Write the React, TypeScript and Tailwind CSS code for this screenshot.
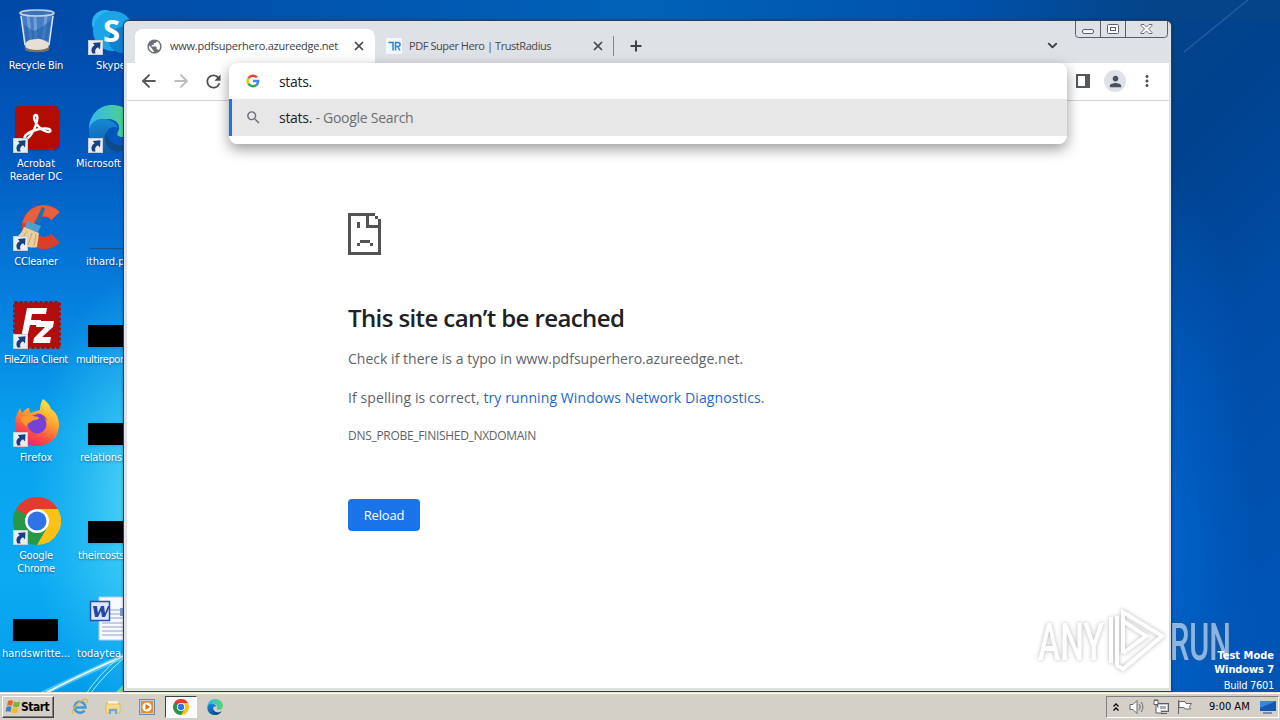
import React from 'react';
import { ArrowLeft, ArrowRight, ChevronDown, Plus, X } from 'lucide-react';
import { MdMoreVert, MdPerson, MdPublic, MdRefresh, MdSearch } from 'react-icons/md';

interface DesktopItem {
  label: string;
  icon: React.ReactNode;
  labelClass: string;
  column?: 'right';
  shortcut?: boolean;
}

const ShortcutArrow: React.FC = () => (
  <svg viewBox="0 0 15 15" className="absolute bottom-0 left-0 h-[15px] w-[15px]">
    <rect x="0.5" y="0.5" width="14" height="14" fill="#e9edf2" stroke="#c9ced6" />
    <path d="M4.500 13.500C2.500 10 3.500 6.800 6.600 5.200L4.800 3l7.700-.8-.5 7.300-2-2.200C7.600 8.400 6.400 10.500 7.500 13.500z" fill="#1a3f80" />
  </svg>
);

const RecycleBinIcon = () => (
  <svg viewBox="0 0 48 48" className="h-12 w-12">
    <path d="M7 5l5 37c3 4 21 4 24 0l5-37z" fill="#7fa9dc" fillOpacity="0.55" />
    <path d="M8 9l4 29M40 9l-4 29" stroke="#d7e5f5" strokeWidth="1.500" />
    <path d="M15 9l3 25M22 10l1 25M33 9l-3 25" stroke="#b9d2ef" strokeOpacity="0.4" strokeWidth="3" />
    <path d="M11 18l10 6 8-4 9-7-3 20-22 2z" fill="#1f5fae" fillOpacity="0.6" />
    <path d="M12 37c4-6 8-4 12-5s8 2 12 4l-1 6c-5 3-17 3-22 0z" fill="#e7dfd3" />
    <path d="M12 40c5 4 19 4 24 0v3c-4 3-20 3-24 0z" fill="#77706b" />
    <ellipse cx="24" cy="6" rx="17" ry="3" fill="#3c73b6" stroke="#c6d3e2" strokeWidth="1.600" />
  </svg>
);

const SkypeIcon = () => (
  <svg viewBox="0 0 48 48" className="h-12 w-12">
    <circle cx="17" cy="16" r="13" fill="#29b6f0" />
    <circle cx="25" cy="24" r="20" fill="#1ba5e8" />
    <circle cx="34" cy="33" r="13" fill="#0f7fd0" />
    <text x="15" y="35" fontSize="31" fontWeight="700" fill="#fff" fontFamily="Open Sans, sans-serif">S</text>
  </svg>
);

const AcrobatIcon = () => (
  <svg viewBox="0 0 48 48" className="h-12 w-12">
    <rect x="3" y="3" width="44" height="43" rx="5" fill="#0b3d7a" fillOpacity="0.5" />
    <rect x="2" y="1" width="44" height="43" rx="5" fill="#b30b00" />
    <path
      d="M12 33.500c-2-2 3-6 9-8 7-2.500 16-3 16.500 0s-7 1.500-12-4c-4-4-6-11-3-11.500 4-.5 1 10-2 15.500-3 6-7 9.500-8.500 8z"
      fill="none"
      stroke="#fff"
      strokeWidth="2.400"
    />
  </svg>
);

const EdgeIcon: React.FC<{ className?: string; id: string }> = ({ className, id }) => (
  <svg viewBox="0 0 48 48" className={className}>
    <defs>
      <linearGradient id={`${id}-top`} x1="0" x2="1">
        <stop offset="0" stopColor="#35b9ef" />
        <stop offset="1" stopColor="#55d66b" />
      </linearGradient>
      <linearGradient id={`${id}-body`} x1="0" y1="0" x2="0" y2="1">
        <stop offset="0" stopColor="#1888d4" />
        <stop offset="1" stopColor="#0c59a4" />
      </linearGradient>
    </defs>
    <path d="M1 25C1 10 11 0 24 0c14 0 24 10 24 20 0 7-5 12-12 12-6 0-8-2-6-5 4-8-3-14-12-13C9 14 3 19 1 25z" fill={`url(#${id}-top)`} />
    <path d="M1 26c0-8 8-13 16-12 8 1 12 6 13 9-2-2-11-2-12 7-.5 9 14 17 26 7-4 7-11 11-20 11C10 48 1 38 1 26z" fill={`url(#${id}-body)`} />
    <path d="M18 27c-4 8 1 18 11 20 6-1 11-4 15-10-12 8-26 0-26-10z" fill="#114a8b" />
  </svg>
);

const CCleanerIcon = () => (
  <svg viewBox="0 0 48 48" className="h-12 w-12">
    <path d="M42.500 13A16 16 0 1 0 42.500 35" fill="none" stroke="#d8402c" strokeWidth="12" />
    <path d="M42.500 13A16 16 0 0 0 15 21" fill="none" stroke="#e9603f" strokeWidth="11" />
    <path d="M29 4l3 1-5 16-5-2z" fill="#236fa9" />
    <path d="M15 18l13 5-3 6-14-4z" fill="#4f9fce" />
    <path d="M11 24l15 6-2 14c-6 2-16-1-23-8 4-3 8-6 10-12z" fill="#e9cf9f" />
    <path d="M14 28l-7 11M19 30l-4 12M23 31l-2 12" stroke="#c9a566" />
  </svg>
);

const FileZillaIcon = () => (
  <svg viewBox="0 0 48 48" className="h-12 w-12">
    <rect x="1.500" y="1.500" width="45" height="45" fill="#b30d0d" stroke="#a01010" strokeWidth="3" strokeDasharray="3 2" />
    <path d="M14 7h20l-1 6H19l-1 6h10l-1 5H17l-3 13H8z" fill="#fff" />
    <path d="M24 20h17l-1 6-11 10h9l-1 6H20l1-5 11-11h-9z" fill="#fff" />
  </svg>
);

const FirefoxIcon = () => (
  <svg viewBox="0 0 48 48" className="h-12 w-12">
    <defs>
      <linearGradient id="fox" x1="0.800" y1="0" x2="0.300" y2="1">
        <stop offset="0" stopColor="#fff04a" />
        <stop offset="0.400" stopColor="#ffa52e" />
        <stop offset="0.750" stopColor="#ff4a45" />
        <stop offset="1" stopColor="#e5207a" />
      </linearGradient>
    </defs>
    <path d="M30 0c4 3 7 6 8 10 5 3 8 9 8 16 0 12-9 21-22 21C11 47 2 38 2 26 2 19 4 14 7 9l2 5c3-3 5-5 7-5l1 5c3-1 7-2 10-3 0-4 1-8 3-11z" fill="url(#fox)" />
    <circle cx="24" cy="25" r="9.500" fill="#7542d8" />
    <path d="M8 19c4-3 7-3 12-2 3 1 5 0 6 2-2 3-6 1-8 4-3 1-4 2-4 4-3-1-6-4-6-8z" fill="#ff9a2a" />
    <path d="M22 15c6-2 11 2 13 8-2-4-7-6-13-8z" fill="#a02fc4" />
  </svg>
);

const ChromeIcon: React.FC<{ className?: string }> = ({ className }) => (
  <svg viewBox="0 0 48 48" className={className}>
    <path d="M24 24L3.200 12A24 24 0 0 1 44.800 12z" fill="#e33b2e" />
    <path d="M24 24V12h20.800A24 24 0 0 1 24 48z" fill="#fbc116" />
    <path d="M24 24l10.400 6L24 48A24 24 0 0 1 3.200 12z" fill="#279847" />
    <path d="M24 12h20.800L24 24z" fill="#fbc116" />
    <path d="M3.200 12L13.600 30 24 24V12z" fill="#e33b2e" />
    <path d="M3.200 12l10.400 18L24 24z" fill="#279847" />
    <circle cx="24" cy="24" r="12" fill="#fff" />
    <circle cx="24" cy="24" r="9.500" fill="#2f74e6" />
  </svg>
);

const WordDocIcon = () => (
  <svg viewBox="0 0 48 48" className="h-12 w-12">
    <path d="M11 2h37v43H11z" fill="#f7f9fe" stroke="#b9c8e6" />
    <path d="M22 15h26M22 19h26M22 23h26M14 28h34M14 32h34M14 36h34M14 40h34" stroke="#8ba5d8" />
    <rect x="32" y="13" width="16" height="8" fill="#7d9bc9" />
    <rect x="2.500" y="6.500" width="19" height="19" fill="#dbe6fa" stroke="#2c4f9e" strokeWidth="1.500" />
    <path d="M5 11h4l1 7 3-7h3l1 7 3-7h2l-5 11h-3l-1-6-3 6H7z" fill="#28489b" />
  </svg>
);

const GoogleIcon: React.FC = () => (
  <svg viewBox="0 0 14 14" className="h-[14px] w-[14px]" fill="none" strokeWidth="2.400">
    <path d="M2.400 4.300A5.300 5.300 0 0 1 10.900 3.500" stroke="#ea4335" />
    <path d="M2.400 9.700A5.300 5.300 0 0 1 2.400 4.300" stroke="#fbbc05" />
    <path d="M10.600 10.900A5.300 5.300 0 0 1 2.400 9.700" stroke="#34a853" />
    <path d="M7 7h5.200a5.300 5.300 0 0 1-1.800 4.100" stroke="#4285f4" />
  </svg>
);

const BlackThumb = () => (
  <div className="flex h-12 w-12 items-end pb-[2px]">
    <div className="h-[22px] w-[45px] bg-black shadow-sm" />
  </div>
);

const leftItems: DesktopItem[] = [
  { label: 'Recycle Bin', icon: <RecycleBinIcon />, labelClass: 'tracking-[-0.25px]' },
  { label: 'Acrobat Reader DC', icon: <AcrobatIcon />, shortcut: true, labelClass: '' },
  { label: 'CCleaner', icon: <CCleanerIcon />, shortcut: true, labelClass: 'tracking-[-0.2px]' },
  { label: 'FileZilla Client', icon: <FileZillaIcon />, shortcut: true, labelClass: 'tracking-[-0.35px]' },
  { label: 'Firefox', icon: <FirefoxIcon />, shortcut: true, labelClass: '' },
  { label: 'Google Chrome', icon: <ChromeIcon className="h-12 w-12" />, shortcut: true, labelClass: 'tracking-[-0.2px]' },
  { label: 'handswritte...', icon: <BlackThumb />, labelClass: '' },
];

const rightItems: DesktopItem[] = [
  { label: 'Skype', icon: <SkypeIcon />, shortcut: true, column: 'right', labelClass: 'pl-[24px]' },
  {
    label: 'Microsoft',
    icon: <EdgeIcon id="edge-desktop" className="h-12 w-12" />,
    shortcut: true,
    column: 'right',
    labelClass: 'pl-1',
  },
  {
    label: 'ithard.p',
    icon: (
      <div className="flex h-12 w-12 items-end pb-[2px] pl-0.5">
        <div className="h-px w-12 bg-[#1a4f86]" />
      </div>
    ),
    column: 'right',
    labelClass: 'pl-[14px]',
  },
  { label: 'multirepor', icon: <BlackThumb />, column: 'right', labelClass: 'pl-1 tracking-[-0.4px]' },
  { label: 'relationsl', icon: <BlackThumb />, column: 'right', labelClass: 'pl-2 tracking-[-0.1px]' },
  { label: 'theircosts', icon: <BlackThumb />, column: 'right', labelClass: 'pl-1.5 tracking-[-0.2px]' },
  { label: 'todaytea', icon: <WordDocIcon />, column: 'right', labelClass: 'pl-[5px]' },
];

const DesktopIcon: React.FC<{ item: DesktopItem }> = ({ item }) => (
  <div className={`flex h-[98px] w-[72px] flex-col pt-[7px] ${item.column === 'right' ? 'items-start' : 'items-center'}`}>
    <div className={`relative h-12 w-12 shrink-0 ${item.column === 'right' ? 'ml-4' : 'ml-0.5'}`}>
      {item.icon}
      {item.shortcut && <ShortcutArrow />}
    </div>
    <span
      className={`mt-1 text-[11px] leading-[13px] text-white [text-shadow:0_1px_2px_rgba(0,20,60,0.5)] ${
        item.column === 'right' ? 'whitespace-nowrap' : 'text-center'
      } ${item.labelClass}`}
    >
      {item.label}
    </span>
  </div>
);

const Wallpaper: React.FC = () => (
  <svg viewBox="0 0 1280 720" className="absolute inset-0 h-[720px] w-[1280px]">
    <defs>
      <linearGradient id="sky-left" x1="0" y1="0" x2="0" y2="1">
        <stop offset="0" stopColor="#0148a6" />
        <stop offset="0.200" stopColor="#0258bd" />
        <stop offset="0.400" stopColor="#057cdc" />
        <stop offset="0.600" stopColor="#08a1ee" />
        <stop offset="0.800" stopColor="#0dabf3" />
        <stop offset="1" stopColor="#0098ea" />
      </linearGradient>
      <linearGradient id="sky-right" x1="0" y1="0" x2="0.250" y2="1">
        <stop offset="0" stopColor="#054489" />
        <stop offset="0.300" stopColor="#00428e" />
        <stop offset="0.600" stopColor="#004ca6" />
        <stop offset="1" stopColor="#0054b4" />
      </linearGradient>
      <linearGradient id="top-strip" x1="0" x2="1">
        <stop offset="0" stopColor="#0148a6" />
        <stop offset="0.500" stopColor="#0162b8" />
        <stop offset="0.750" stopColor="#0052ac" />
        <stop offset="0.900" stopColor="#054489" />
        <stop offset="1" stopColor="#054489" />
      </linearGradient>
      <radialGradient id="glow">
        <stop offset="0" stopColor="#6ee8f8" stopOpacity="0.850" />
        <stop offset="1" stopColor="#3ccff5" stopOpacity="0" />
      </radialGradient>
      <radialGradient id="blue-glow">
        <stop offset="0" stopColor="#0067cf" stopOpacity="0.900" />
        <stop offset="1" stopColor="#0060c8" stopOpacity="0" />
      </radialGradient>
    </defs>
    <rect width="640" height="720" fill="url(#sky-left)" />
    <rect x="1100" width="180" height="720" fill="url(#sky-right)" />
    <rect width="1280" height="20" fill="url(#top-strip)" />
    <ellipse cx="150" cy="500" rx="120" ry="230" fill="url(#glow)" />
    <ellipse cx="1165" cy="540" rx="90" ry="380" fill="url(#blue-glow)" />
    <path d="M1184 52L1248 0" stroke="#4f86bd" strokeOpacity="0.400" strokeWidth="1.500" />
    <path d="M42 694Q75 678 126 655" fill="none" stroke="#9fe9fb" strokeOpacity="0.500" strokeWidth="5" />
    <path d="M44 694Q75 677 126 655" fill="none" stroke="#e4fbff" strokeWidth="1.500" />
    <path d="M86 694Q98 676 118 658M90 694Q103 676 124 658" fill="none" stroke="#a5eefb" strokeWidth="1" />
    <path d="M114 694l10-10v10z" fill="#6fd895" />
  </svg>
);

const Tab: React.FC<{ title: string; icon: React.ReactNode; active?: boolean; titleClass: string }> = ({
  title,
  icon,
  active,
  titleClass,
}) => (
  <div className={`flex h-[34px] items-center ${active ? 'w-[240px] rounded-t-lg bg-white pl-[11px]' : 'w-[238px] pl-[11px]'}`}>
    {icon}
    <span
      className={`min-w-0 flex-1 whitespace-nowrap pl-[7px] text-[11px] ${active ? 'text-[#3c4043]' : 'text-[#45494d]'}`}
    >
      <span className={titleClass}>{title}</span>
    </span>
    <X size={14} strokeWidth={3} className={`shrink-0 text-[#45494d] ${active ? 'mr-[9px]' : 'mr-2'}`} />
  </div>
);

const WindowControls: React.FC = () => (
  <svg viewBox="0 0 94 18" className="h-[18px] w-[94px]" fill="none" stroke="#5a5e66">
    <path d="M.5 0v13.500a3 3 0 0 0 3 3h86a3 3 0 0 0 3-3V0M25.500 0v16.500M50.500 0v16.500" strokeWidth="1" />
    <rect x="7.500" y="8.500" width="11" height="4" rx="1.500" fill="#fff" />
    <rect x="32.500" y="3.500" width="11" height="9" rx="1" fill="#fff" />
    <rect x="35.500" y="6.500" width="5" height="3" />
    <path d="M66 3.500h3l2.500 2.500L74 3.500h3v1L73.500 8l3.500 3.500v1h-3l-2.500-2.500L69 12.500h-3v-1L69.500 8 66 4.500z" fill="#fff" strokeWidth="0.900" />
  </svg>
);

const SadPageIcon: React.FC = () => (
  <svg viewBox="0 0 33 42" className="h-[42px] w-[33px]" fill="#535353" shapeRendering="crispEdges">
    <path d="M0 0h27v3h-6v9h9v-6h3v36H0zM3 3v36h27V15H18V3z" fillRule="evenodd" />
    <path d="M27 3h3v3h-3zM9 9h3v6H9zM12 27h10v3H12zM9 30h3v3H9zM22 30h3v3h-3z" />
  </svg>
);

const BrowserWindow: React.FC = () => (
  <div className="absolute left-[123px] top-[20px] flex h-[672px] w-[1049px] flex-col rounded-t-md border border-[#2c3f5c] bg-[#dee1e6] pb-[3px] pl-[3px] pr-[2px] shadow-[0_0_3px_rgba(0,0,0,0.35)]">
    <div className="flex h-[42px] shrink-0 justify-between pl-2">
      <div className="flex items-end">
        <Tab
          active
          title="www.pdfsuperhero.azureedge.net"
          icon={<MdPublic size={17} className="shrink-0 text-[#6b6f73]" />}
          titleClass="tracking-[-0.25px]"
        />
        <Tab
          title="PDF Super Hero | TrustRadius"
          icon={
            <svg viewBox="0 0 16 16" className="h-4 w-4 shrink-0">
              <rect width="16" height="16" rx="1" fill="#f3f8fe" />
              <path d="M2.500 4.500H7v8M9.500 12.500v-8H12a2 2 0 0 1 0 4H9.500M12 9l2 3.500" fill="none" stroke="#2b83ea" strokeWidth="1.500" />
            </svg>
          }
          titleClass="tracking-[-0.43px]"
        />
        <div className="mb-[7px] flex h-5 items-center border-l border-[#85898f] pl-[14px]">
          <Plus size={16} strokeWidth={3} className="text-[#3c4043]" />
        </div>
      </div>
      <div className="flex flex-col items-end">
        <WindowControls />
        <ChevronDown size={15} strokeWidth={3} className="-mt-px mr-[109px] text-[#3c4043]" />
      </div>
    </div>

    <div className="flex h-[38px] shrink-0 items-center justify-between border-b border-[#d5d5d7] bg-white pb-px pl-3 pr-[16px]">
      <div className="flex items-center gap-3">
        <ArrowLeft size={20} strokeWidth={2.400} className="text-[#55585c]" />
        <ArrowRight size={20} strokeWidth={2.400} className="text-[#bcbec0]" />
        <MdRefresh size={21} className="text-[#4d5054]" />
      </div>
      <div className="flex items-center">
        <div className="mr-[14px] h-[14px] w-[14px] border-2 border-r-[5px] border-[#55585c]" />
        <div className="mr-[12px] flex h-[22px] w-[22px] items-center justify-center rounded-full bg-[#dee1e6]">
          <MdPerson size={17} className="text-[#4a5160]" />
        </div>
        <MdMoreVert size={18} className="-mr-[3px] text-[#4d5054]" />
      </div>
    </div>

    <div className="flex flex-1 flex-col items-start bg-white pl-[221px] pt-[112px] text-[#5f6368]">
      <SadPageIcon />
      <h1 className="mt-[47px] whitespace-nowrap text-[24px] font-semibold leading-[32px] tracking-[-0.6px] text-[#202124]">
        This site can’t be reached
      </h1>
      <p className="mt-[15px] whitespace-nowrap text-[14px] leading-[20px] tracking-[0.02px]">
        Check if there is a typo in www.pdfsuperhero.azureedge.net.
      </p>
      <p className="mt-[19px] whitespace-nowrap text-[14px] leading-[20px] tracking-[0.1px]">
        If spelling is correct, <a className="text-[#1a67d2]">try running Windows Network Diagnostics</a>.
      </p>
      <p className="mt-[19px] whitespace-nowrap text-[12px] leading-[18px] tracking-[-0.3px]">DNS_PROBE_FINISHED_NXDOMAIN</p>
      <button className="mt-[54px] h-8 w-[72px] rounded-[4px] bg-[#1a73e8] pt-px text-[13px] tracking-[-0.2px] text-white">
        Reload
      </button>
    </div>

    <div className="absolute left-[105px] top-[42px] h-[81px] w-[838px] overflow-hidden rounded-lg bg-white shadow-[0_5px_14px_rgba(0,0,0,0.4)]">
      <div className="flex h-9 items-center pl-[17px] text-[14px] text-[#202124]">
        <GoogleIcon />
        <span className="pl-[19px] tracking-[-0.32px]">stats.</span>
      </div>
      <div className="flex h-[37px] items-center border-l-[3px] border-[#1a73e8] bg-[#e7e7e8] pl-[13px] text-[14px] text-[#202124]">
        <MdSearch size={17} className="text-[#6b6f73]" />
        <span className="whitespace-pre pl-[17px] tracking-[-0.28px]">
          stats. <span className="text-[#6b6f73]">- Google Search</span>
        </span>
      </div>
    </div>
  </div>
);

const Watermark: React.FC = () => (
  <div className="absolute left-[1038px] top-[607px] h-[68px] w-[196px] opacity-55">
    <svg viewBox="0 0 196 68" className="h-[68px] w-[196px] [filter:drop-shadow(0_0_2px_rgba(80,80,80,0.75))]">
      <g fill="#fff" fontFamily="Roboto, sans-serif" fontSize="52" fontWeight="500">
        <text x="0" y="53" textLength="66" lengthAdjust="spacingAndGlyphs">ANY</text>
        <text x="132" y="53" textLength="61" lengthAdjust="spacingAndGlyphs">RUN</text>
      </g>
      <path d="M73 56V10M79 58V9M85 46V5l39 24-39 33-7-4M85 46l23-17-23-15" fill="none" stroke="#fff" strokeWidth="4" />
    </svg>
  </div>
);

const ExplorerIcon = () => (
  <svg viewBox="0 0 16 16" className="h-4 w-4">
    <path d="M1 3h5l1 1h7v9H1z" fill="#e7c766" />
    <path d="M3 2h10v4H3z" fill="#f7f2df" />
    <path d="M1 5h14v9h-3v-4H4v4H1z" fill="#f5dd8b" stroke="#c9a545" strokeWidth="0.500" />
    <path d="M4 15v-5h8v5h-2v-3H6v3z" fill="#6ba9d8" />
  </svg>
);

const IeIcon = () => (
  <svg viewBox="0 0 18 18" className="h-[18px] w-[18px]" fill="none">
    <path d="M13.500 12.500A5.500 5.500 0 1 1 14.500 9.500H5" stroke="#3d9bdd" strokeWidth="2.600" />
    <path d="M2 16C0 13 5 6 10 3s8-2 6 2" stroke="#e5b73a" strokeWidth="1.300" />
  </svg>
);

const Taskbar: React.FC = () => (
  <div className="absolute bottom-0 left-0 flex h-7 w-[1280px] items-center justify-between border-t border-[#e4e1dc] bg-[#d4d0c8] pl-0.5 pr-px pt-px shadow-[inset_0_1px_0_#fff]">
    <div className="flex items-center">
      <div className="flex h-[22px] w-[52px] items-center border border-b-[#404040] border-l-white border-r-[#404040] border-t-white pl-0.5 shadow-[inset_-1px_-1px_0_#808080]">
        <svg viewBox="0 0 16 16" className="h-4 w-4 shrink-0">
          <path d="M3 2c2-1 4-1 5 0L7 7C5 6 3.500 6 2 7z" fill="#e8622a" />
          <path d="M9 2.500c2 1 4 1 6 0L14 7.500c-2 1-4 1-6 0z" fill="#7db72f" />
          <path d="M1.500 8c2-1 4-1 5 0l-1 5c-2-1-3.500-1-5 0z" fill="#3c80d0" />
          <path d="M7.500 8.500c2 1 4 1 6 0l-1 5c-2 1-4 1-6 0z" fill="#f6bd21" />
        </svg>
        <span className="text-[12px] font-bold tracking-[-0.5px] text-black">Start</span>
      </div>
      <div className="ml-[17px] flex items-center">
        <IeIcon />
        <div className="ml-4"><ExplorerIcon /></div>
        <svg viewBox="0 0 16 16" className="ml-[18px] h-4 w-4">
          <rect x="0.500" y="0.500" width="15" height="15" fill="#b8d3ec" stroke="#5f8fc0" />
          <rect x="2" y="2" width="12" height="12" fill="#f28a1d" />
          <circle cx="8" cy="8" r="4.600" fill="#fff" />
          <path d="M6.500 5l4.500 3-4.500 3z" fill="#e26b0a" />
        </svg>
        <div className="ml-[10px] flex h-[22px] w-[32px] items-center justify-center border border-b-white border-l-[#404040] border-r-white border-t-[#404040] bg-[#fafafa]">
          <ChromeIcon className="h-4 w-4" />
        </div>
        <EdgeIcon id="edge-taskbar" className="ml-[10px] h-4 w-4" />
      </div>
    </div>

    <div className="flex h-[22px] w-[173px] items-center border border-b-white border-l-[#808080] border-r-white border-t-[#808080] pl-[5px]">
      <svg viewBox="0 0 8 10" className="h-[10px] w-2" fill="none" stroke="#000" strokeWidth="1.300">
        <path d="M1.500 4.500L4 2l2.500 2.500M1.500 8.500L4 6l2.500 2.500" />
      </svg>
      <svg viewBox="0 0 16 16" className="ml-[9px] h-4 w-4" fill="none" stroke="#66686b">
        <path d="M1 5.500h3l4-4v13l-4-4H1z" fill="#fff" />
        <path d="M10 5c1.500 2 1.500 4 0 6M12 3c2.500 3 2.500 7 0 10" />
      </svg>
      <svg viewBox="0 0 16 16" className="ml-2 h-4 w-4" fill="none" stroke="#5c5f63">
        <rect x="4.500" y="4.500" width="11" height="8" fill="#c4c7ca" />
        <rect x="6.500" y="6.500" width="7" height="4" fill="#a9adb2" stroke="#fff" />
        <path d="M1 1.500h4v4H1zM3 6v8h6M8 14.500h6M2 0v2M4 0v2" fill="#fff" />
      </svg>
      <svg viewBox="0 0 16 16" className="ml-2 h-4 w-4" fill="#fff" stroke="#66686b">
        <path d="M1.500 1v14M2 2.500h6l1 2h5.500l-2 3 1 2.500H8l-1-1.500H2z" />
      </svg>
      <span className="ml-4 whitespace-nowrap text-[11px] text-black">9:00 AM</span>
      <svg viewBox="0 0 16 14" className="ml-[10px] h-[14px] w-4">
        <rect width="16" height="10" y="1" fill="#1558b0" />
        <path d="M0 1h16L0 8z" fill="#3d86d8" />
        <path d="M3 13h9" stroke="#7c8ba0" strokeWidth="2" />
      </svg>
    </div>
  </div>
);

export default function App() {
  return (
    <div className="relative h-[720px] w-[1280px] overflow-hidden bg-[#0052ac] font-['DejaVu_Sans_Condensed','DejaVu_Sans',sans-serif]">
      <Wallpaper />
      <div className="relative flex">
        <div className="flex w-[72px] flex-col">
          {leftItems.map((item) => (
            <DesktopIcon key={item.label} item={item} />
          ))}
        </div>
        <div className="flex w-[72px] flex-col">
          {rightItems.map((item) => (
            <DesktopIcon key={item.label} item={item} />
          ))}
        </div>
      </div>
      <div className="font-['Open_Sans','Noto_Sans',sans-serif]">
        <BrowserWindow />
      </div>
      <Watermark />
      <div className="absolute right-[6px] top-[649px] text-right text-[11px] leading-[14px] text-white">
        <p className="font-bold">Test Mode</p>
        <p className="font-bold tracking-[-0.1px]">Windows 7</p>
        <p className="pt-0.5 tracking-[-0.3px]">Build 7601</p>
      </div>
      <Taskbar />
    </div>
  );
}
